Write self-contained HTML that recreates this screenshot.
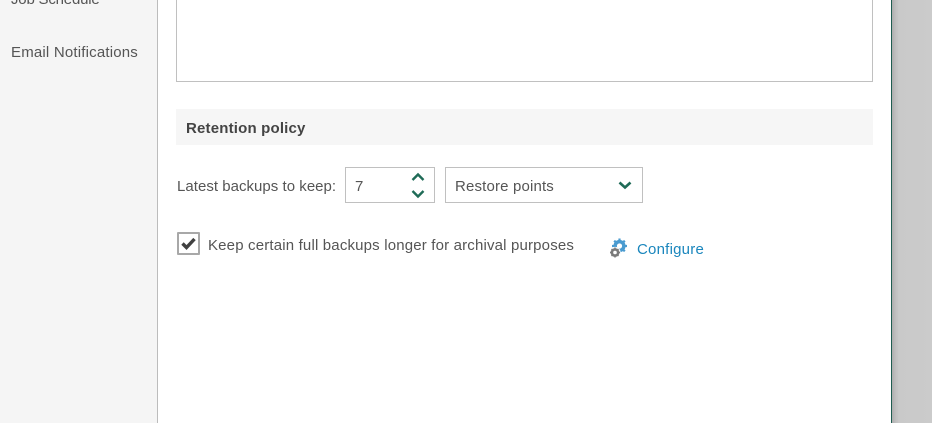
<!DOCTYPE html>
<html>
<head>
<meta charset="utf-8">
<style>
html,body{margin:0;padding:0;width:932px;height:423px;overflow:hidden;background:#fff}
body{position:relative;font-family:"Liberation Sans",sans-serif;color:#555;font-size:15px}
.a{position:absolute}
.t{position:absolute;white-space:nowrap;line-height:20px}
</style>
</head>
<body>
<div class="a" style="left:0;top:0;width:157px;height:423px;background:#f5f5f5"></div>
<div class="a" style="left:157px;top:0;width:1px;height:423px;background:#bcbcbc"></div>
<div class="a" style="left:891px;top:0;width:41px;height:423px;background:linear-gradient(to right,#a8a8a8 0,#bdbdbd 4px,#c9c9c9 8px,#cbcbcb 100%)"></div>
<div class="a" style="left:891px;top:0;width:1px;height:423px;background:#1f5c50"></div>

<div class="t" style="left:11px;top:-10px;letter-spacing:-.2px">Job Schedule</div>
<div class="t" style="left:11px;top:43px;letter-spacing:.19px">Email Notifications</div>

<div class="a" style="left:176px;top:-2px;width:695px;height:82px;border:1px solid #c0c0c0"></div>
<div class="a" style="left:176px;top:109px;width:697px;height:36px;background:#f6f6f6"></div>
<div class="t" style="left:186px;top:119px;font-weight:bold;color:#444;letter-spacing:.18px">Retention policy</div>

<div class="t" style="left:177px;top:177px;letter-spacing:.03px">Latest backups to keep:</div>
<div class="a" style="left:345px;top:167px;width:88px;height:34px;border:1px solid #c0c0c0"></div>
<div class="t" style="left:355px;top:177px">7</div>
<svg class="a" style="left:410px;top:170px" width="16" height="32" viewBox="0 0 16 32">
<path d="M2.500 10 L8 4.500 L13.500 10" fill="none" stroke="#1f6b57" stroke-width="2.400"/>
<path d="M2.500 21 L8 26.500 L13.500 21" fill="none" stroke="#1f6b57" stroke-width="2.400"/>
</svg>

<div class="a" style="left:445px;top:167px;width:196px;height:34px;border:1px solid #c0c0c0"></div>
<div class="t" style="left:455px;top:177px;letter-spacing:.16px">Restore points</div>
<svg class="a" style="left:617px;top:178px" width="16" height="14" viewBox="0 0 16 14">
<path d="M2.500 4.500 L8 9.500 L13.500 4.500" fill="none" stroke="#1f6b57" stroke-width="2.600"/>
</svg>

<div class="a" style="left:177px;top:232px;width:19px;height:19px;border:2px solid #a8a8a8;border-radius:1px;background:#fff"></div>
<svg class="a" style="left:177px;top:232px" width="23" height="23" viewBox="0 0 23 23">
<path d="M5.500 11.500 L9.500 15.500 L17.500 7" fill="none" stroke="#404040" stroke-width="3.400"/>
</svg>
<div class="t" style="left:208px;top:236px;letter-spacing:.17px">Keep certain full backups longer for archival purposes</div>

<svg class="a" style="left:608px;top:238px" width="22" height="22" viewBox="0 0 22 22">
<circle cx="11.500" cy="8" r="4.500" fill="none" stroke="#4a9bd0" stroke-width="3.200"/>
<path d="M11.500 .5V15.500M4 8H19M6.200 2.700L16.800 13.300M16.800 2.700L6.200 13.300" stroke="#4a9bd0" stroke-width="2.200"/>
<circle cx="11.500" cy="8" r="2.600" fill="#fff"/>
<circle cx="7" cy="14.500" r="5.600" fill="#fff"/>
<circle cx="7" cy="14.500" r="3.200" fill="none" stroke="#7b7b7b" stroke-width="2.400"/>
<path d="M7 9.500V19.500M2 14.500H12M3.500 11L10.500 18M10.500 11L3.500 18" stroke="#7b7b7b" stroke-width="1.500"/>
<circle cx="7" cy="14.500" r="1.800" fill="#fff"/>
</svg>
<div class="t" style="left:637px;top:240px;color:#1a86bd;letter-spacing:.22px;height:17px;overflow:hidden">Configure</div>
</body>
</html>
